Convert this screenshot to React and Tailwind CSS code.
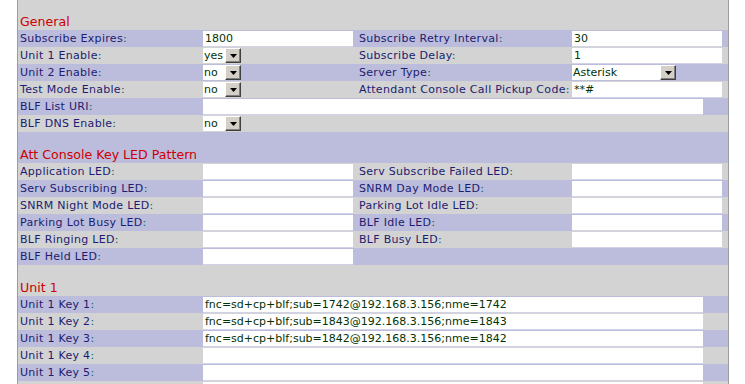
import React from 'react';

const GRAY = 'bg-[#d3d3d3]';
const PURPLE = 'bg-[#bcbcdc]';

function Label({ text }) {
  return (
    <div className="pl-[2px] whitespace-nowrap overflow-hidden tracking-[0.3px] text-[#1c1c70]">
      {text}
      {text && <span className="text-[#006060]">:</span>}
    </div>
  );
}

function TextInput({ value = '', w = 'w-[150px]' }) {
  return (
    <div
      className={`${w} mt-[1px] h-[16px] bg-white border-b border-[#d2d2e8] pl-[2px] leading-[15px] text-[#033303] whitespace-nowrap overflow-hidden`}
    >
      {value}
    </div>
  );
}

function Select({ value, w = 'w-[38px]' }) {
  return (
    <div className={`${w} mt-[1px] h-[15px] flex bg-white`}>
      <div className="flex-1 pl-[1px] leading-[15px] text-[#033303]">{value}</div>
      <div className="w-[16px] h-[15px] bg-[#d4d0c8] border-t border-l border-t-white border-l-white border-r border-b border-r-[#404040] border-b-[#404040] flex items-center justify-center shadow-[inset_-1px_-1px_0_#808080]">
        <svg width="7" height="4" viewBox="0 0 7 4">
          <path d="M0 0h7L3.5 4z" fill="#000" />
        </svg>
      </div>
    </div>
  );
}

function Row({ bg, children }) {
  return (
    <div className={`grid grid-cols-[184px_155px_214px_157px] h-[17px] leading-[17px] ${bg}`}>
      {children}
    </div>
  );
}

function Field({ bg, label, control, label2, control2 }) {
  return (
    <Row bg={bg}>
      <Label text={label} />
      <div className="pl-[1px]">{control}</div>
      {label2 ? <Label text={label2} /> : <div />}
      <div className="pl-[1px]">{control2}</div>
    </Row>
  );
}

function WideField({ bg, label, value }) {
  return (
    <div className={`flex h-[17px] leading-[17px] ${bg}`}>
      <div className="w-[184px]">
        <Label text={label} />
      </div>
      <div className="pl-[1px]">
        <TextInput value={value} w="w-[500px]" />
      </div>
    </div>
  );
}

function Heading({ bg, text, h = 'h-[31px]' }) {
  return (
    <div className={`${h} ${bg} flex flex-col justify-end`}>
      <div className="pl-[2px] text-[12.6px] leading-[15px] text-[#cc0000]">{text}</div>
      <div className="h-[1px]" />
    </div>
  );
}

const ledRows = [
  ['Application LED', 'Serv Subscribe Failed LED'],
  ['Serv Subscribing LED', 'SNRM Day Mode LED'],
  ['SNRM Night Mode LED', 'Parking Lot Idle LED'],
  ['Parking Lot Busy LED', 'BLF Idle LED'],
  ['BLF Ringing LED', 'BLF Busy LED'],
  ['BLF Held LED', null],
];

const unitKeys = [
  'fnc=sd+cp+blf;sub=1742@192.168.3.156;nme=1742',
  'fnc=sd+cp+blf;sub=1843@192.168.3.156;nme=1843',
  'fnc=sd+cp+blf;sub=1842@192.168.3.156;nme=1842',
  '',
  '',
];

export default function App() {
  return (
    <div className="w-[745px] h-[384px] overflow-hidden bg-white text-[11px] font-['DejaVu_Sans',Verdana,sans-serif]">
      <div className="ml-[17px] w-[712px] min-h-[384px] border-x border-[#9c9c9c] bg-[#d3d3d3]">
        <Heading bg={GRAY} text="General" h="h-[30px]" />
        <Field bg={PURPLE} label="Subscribe Expires" control={<TextInput value="1800" />} label2="Subscribe Retry Interval" control2={<TextInput value="30" />} />
        <Field bg={GRAY} label="Unit 1 Enable" control={<Select value="yes" />} label2="Subscribe Delay" control2={<TextInput value="1" />} />
        <Field bg={PURPLE} label="Unit 2 Enable" control={<Select value="no" />} label2="Server Type" control2={<Select value="Asterisk" w="w-[104px]" />} />
        <Field bg={GRAY} label="Test Mode Enable" control={<Select value="no" />} label2="Attendant Console Call Pickup Code" control2={<TextInput value="**#" />} />
        <WideField bg={PURPLE} label="BLF List URI" value="" />
        <Field bg={GRAY} label="BLF DNS Enable" control={<Select value="no" />} />

        <Heading bg={PURPLE} text="Att Console Key LED Pattern" />
        {ledRows.map(([a, b], i) => (
          <Field
            key={a}
            bg={i % 2 === 0 ? GRAY : PURPLE}
            label={a}
            control={<TextInput />}
            label2={b}
            control2={b ? <TextInput /> : null}
          />
        ))}

        <Heading bg={GRAY} text="Unit 1" />
        {unitKeys.map((v, i) => (
          <WideField key={i} bg={i % 2 === 0 ? PURPLE : GRAY} label={`Unit 1 Key ${i + 1}`} value={v} />
        ))}
        <WideField bg={GRAY} label="" value="" />
      </div>
    </div>
  );
}
